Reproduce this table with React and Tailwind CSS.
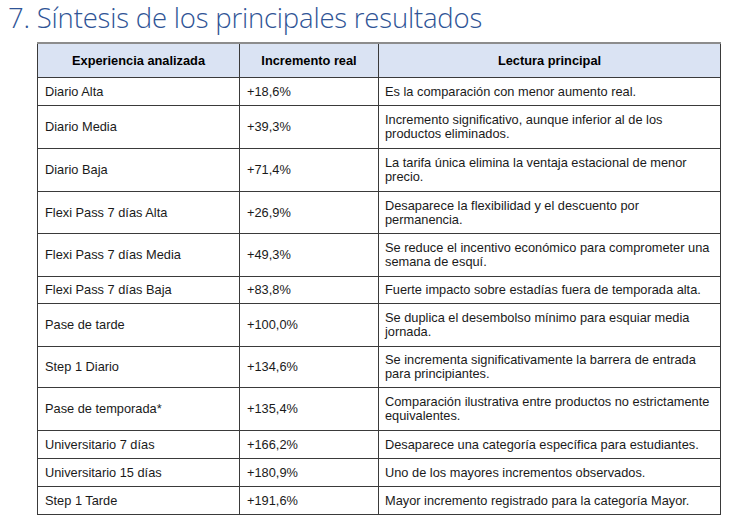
import React from 'react';

// Rows of the summary table: [experiencia, incremento, lectura, row height]
const rows = [
  ['Diario Alta', '+18,6%', 'Es la comparación con menor aumento real.', 'h-[28px]'],
  ['Diario Media', '+39,3%', 'Incremento significativo, aunque inferior al de los productos eliminados.', 'h-[43px]'],
  ['Diario Baja', '+71,4%', 'La tarifa única elimina la ventaja estacional de menor precio.', 'h-[43px]'],
  ['Flexi Pass 7 días Alta', '+26,9%', 'Desaparece la flexibilidad y el descuento por permanencia.', 'h-[42px]'],
  ['Flexi Pass 7 días Media', '+49,3%', 'Se reduce el incentivo económico para comprometer una semana de esquí.', 'h-[43px]'],
  ['Flexi Pass 7 días Baja', '+83,8%', 'Fuerte impacto sobre estadías fuera de temporada alta.', 'h-[27px]'],
  ['Pase de tarde', '+100,0%', 'Se duplica el desembolso mínimo para esquiar media jornada.', 'h-[43px]'],
  ['Step 1 Diario', '+134,6%', 'Se incrementa significativamente la barrera de entrada para principiantes.', 'h-[41px]'],
  ['Pase de temporada*', '+135,4%', 'Comparación ilustrativa entre productos no estrictamente equivalentes.', 'h-[43px]'],
  ['Universitario 7 días', '+166,2%', 'Desaparece una categoría específica para estudiantes.', 'h-[28px]'],
  ['Universitario 15 días', '+180,9%', 'Uno de los mayores incrementos observados.', 'h-[28px]'],
  ['Step 1 Tarde', '+191,6%', 'Mayor incremento registrado para la categoría Mayor.', 'h-[28px]'],
];

const App = () => {
  return (
    <div className="w-[730px] h-[520px] bg-white overflow-hidden">
      {/* Title */}
      <h1 className="pl-[8px] h-[42px] text-[27.5px] leading-[36px] font-light text-[#2f5496] font-['Open_Sans',sans-serif] tracking-[-0.2px] whitespace-nowrap">
        7. Síntesis de los principales resultados
      </h1>

      {/* Table */}
      <div className="ml-[37px] w-[684px] border-t-2 border-[#8c8c8c] font-['Liberation_Sans',Arial,sans-serif] text-[12.8px] leading-[14px] text-[#1a1a1a]">
        <div className="grid grid-cols-[202px_139px_1fr] h-[34px] bg-[#dae3f3] border-x border-b border-[#3a3a3a] font-bold text-black">
          <div className="flex items-center justify-center border-r border-[#3a3a3a]">Experiencia analizada</div>
          <div className="flex items-center justify-center border-r border-[#3a3a3a]">Incremento real</div>
          <div className="flex items-center justify-center">Lectura principal</div>
        </div>
        {rows.map(([exp, inc, lec, h]) => (
          <div
            key={exp}
            className={`grid grid-cols-[202px_139px_1fr] border-x border-b border-[#3a3a3a] ${h}`}
          >
            <div className="flex items-center pl-[7px] border-r border-[#3a3a3a]">{exp}</div>
            <div className="flex items-center pl-[7px] border-r border-[#3a3a3a]">{inc}</div>
            <div className="flex items-center pl-[6px] pr-[8px]">{lec}</div>
          </div>
        ))}
      </div>
    </div>
  );
};

export default App;
